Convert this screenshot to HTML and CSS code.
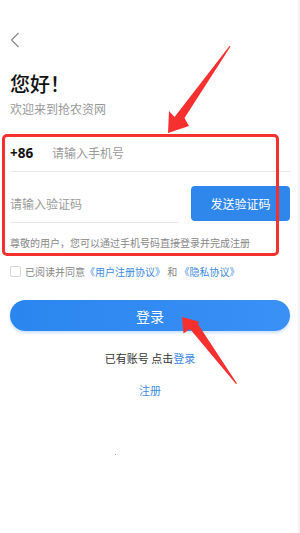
FILE: index.html
```html
<!DOCTYPE html>
<html lang="zh">
<head>
<meta charset="utf-8">
<title>登录</title>
<link rel="stylesheet" href="styles.css">
</head>
<body>
<div class="page">
  <div class="nav">
    <svg class="back" width="10" height="16" viewBox="0 0 10 16"><path d="M8.5 1 L1.5 8 L8.5 15" fill="none" stroke="#8a8a8a" stroke-width="1.2"/></svg>
  </div>
  <h1 class="title">您好！</h1>
  <p class="welcome">欢迎来到抢农资网</p>

  <div class="form">
    <div class="row phone">
      <span class="code">+86</span>
      <span class="placeholder">请输入手机号</span>
    </div>
    <div class="row verify">
      <div class="verify-input"><span class="placeholder">请输入验证码</span></div>
      <button class="send">发送验证码</button>
    </div>
    <p class="notice">尊敬的用户，您可以通过手机号码直接登录并完成注册</p>
  </div>

  <div class="agree">
    <span class="check"></span>
    <span class="agree-text">已阅读并同意<a class="link">《用户注册协议》</a> 和 <a class="link">《隐私协议》</a></span>
  </div>

  <button class="login">登录</button>

  <p class="has-account">已有账号 点击<a class="link">登录</a></p>
  <p class="register"><a class="link">注册</a></p>
  <span class="dot"></span>

  <div class="highlight"></div>
  <svg class="arrows" width="300" height="533" viewBox="0 0 300 533">
    <path d="M230.5 46.5 L184.5 118 L189 126 L168 133 L169 111 L174.5 117 L229.5 46 Z" fill="#f5302f"/>
    <path d="M237 383.5 L198.5 325 L198.5 321.5 L182 317 L183.5 333.5 L190 329 L236 384 Z" fill="#f5302f"/>
  </svg>
</div>
</body>
</html>
```
FILE: styles.css
```css
* { box-sizing: border-box; }
html, body { margin: 0; padding: 0; background: #fff; }
body {
  font-family: "Noto Sans CJK SC", "Noto Sans", sans-serif;
  color: #222;
}
.page {
  position: relative;
  width: 300px;
  height: 533px;
  padding: 0 10px;
  overflow: hidden;
  box-shadow: inset -2px 0 0 #f3f3f3;
}
.nav {
  height: 62px;
  padding-top: 32px;
}
.back { display: block; }
.title {
  margin: 8px 0 0;
  font-size: 20px;
  font-weight: 500;
  line-height: 28px;
  color: #111;
}
.welcome {
  margin: 2px 0 0;
  font-size: 12px;
  line-height: 18px;
  color: #999;
}
.form { margin-top: 16px; }
.row { display: flex; align-items: center; }
.phone {
  height: 38px;
  border-bottom: 1px solid #e8e8e8;
}
.code {
  width: 42px;
  font-size: 13.5px;
  font-weight: 700;
  color: #111;
  font-family: "Noto Sans", sans-serif;
}
.placeholder {
  font-size: 12px;
  color: #9a9a9a;
}
.verify {
  height: 51px;
  justify-content: space-between;
  align-items: flex-end;
}
.verify-input {
  width: 168px;
  height: 50px;
  display: flex;
  align-items: center;
  padding-top: 12px;
  border-bottom: 1px solid #e8e8e8;
}
.send {
  width: 99px;
  height: 35px;
  margin-bottom: 2px;
  border: 0;
  border-radius: 4px;
  background: #2f87ec;
  color: #fff;
  font-family: inherit;
  font-size: 12px;
  padding: 0;
}
.notice {
  margin: 12px 0 0;
  font-size: 10px;
  line-height: 16px;
  color: #888;
}
.agree {
  margin-top: 14px;
  display: flex;
  align-items: center;
  height: 13px;
}
.check {
  width: 11px;
  height: 11px;
  border: 1px solid #d6d6d6;
  border-radius: 2px;
  margin-right: 4px;
}
.agree-text {
  font-size: 10px;
  color: #888;
  line-height: 13px;
}
.link { color: #3d8be2; }
.login {
  display: block;
  width: 280px;
  height: 31px;
  margin-top: 22px;
  border: 0;
  border-radius: 16px;
  background: linear-gradient(90deg, #2a86ef, #3a90f5);
  color: #fff;
  font-family: inherit;
  font-size: 14px;
  box-shadow: 0 2px 3px rgba(40, 130, 240, 0.25);
}
.has-account {
  margin: 18px 0 0;
  text-align: center;
  font-size: 11px;
  line-height: 18px;
  color: #333;
}
.register {
  margin: 14px 0 0;
  text-align: center;
  font-size: 11px;
  line-height: 18px;
}
.dot {
  position: absolute;
  left: 115px;
  top: 454px;
  width: 1px;
  height: 1px;
  background: #999;
}
.highlight {
  position: absolute;
  left: 2px;
  top: 134px;
  width: 277px;
  height: 122px;
  border: 3px solid #f5302f;
  border-radius: 5px;
  pointer-events: none;
}
.arrows {
  position: absolute;
  left: 0;
  top: 0;
  pointer-events: none;
}
```
